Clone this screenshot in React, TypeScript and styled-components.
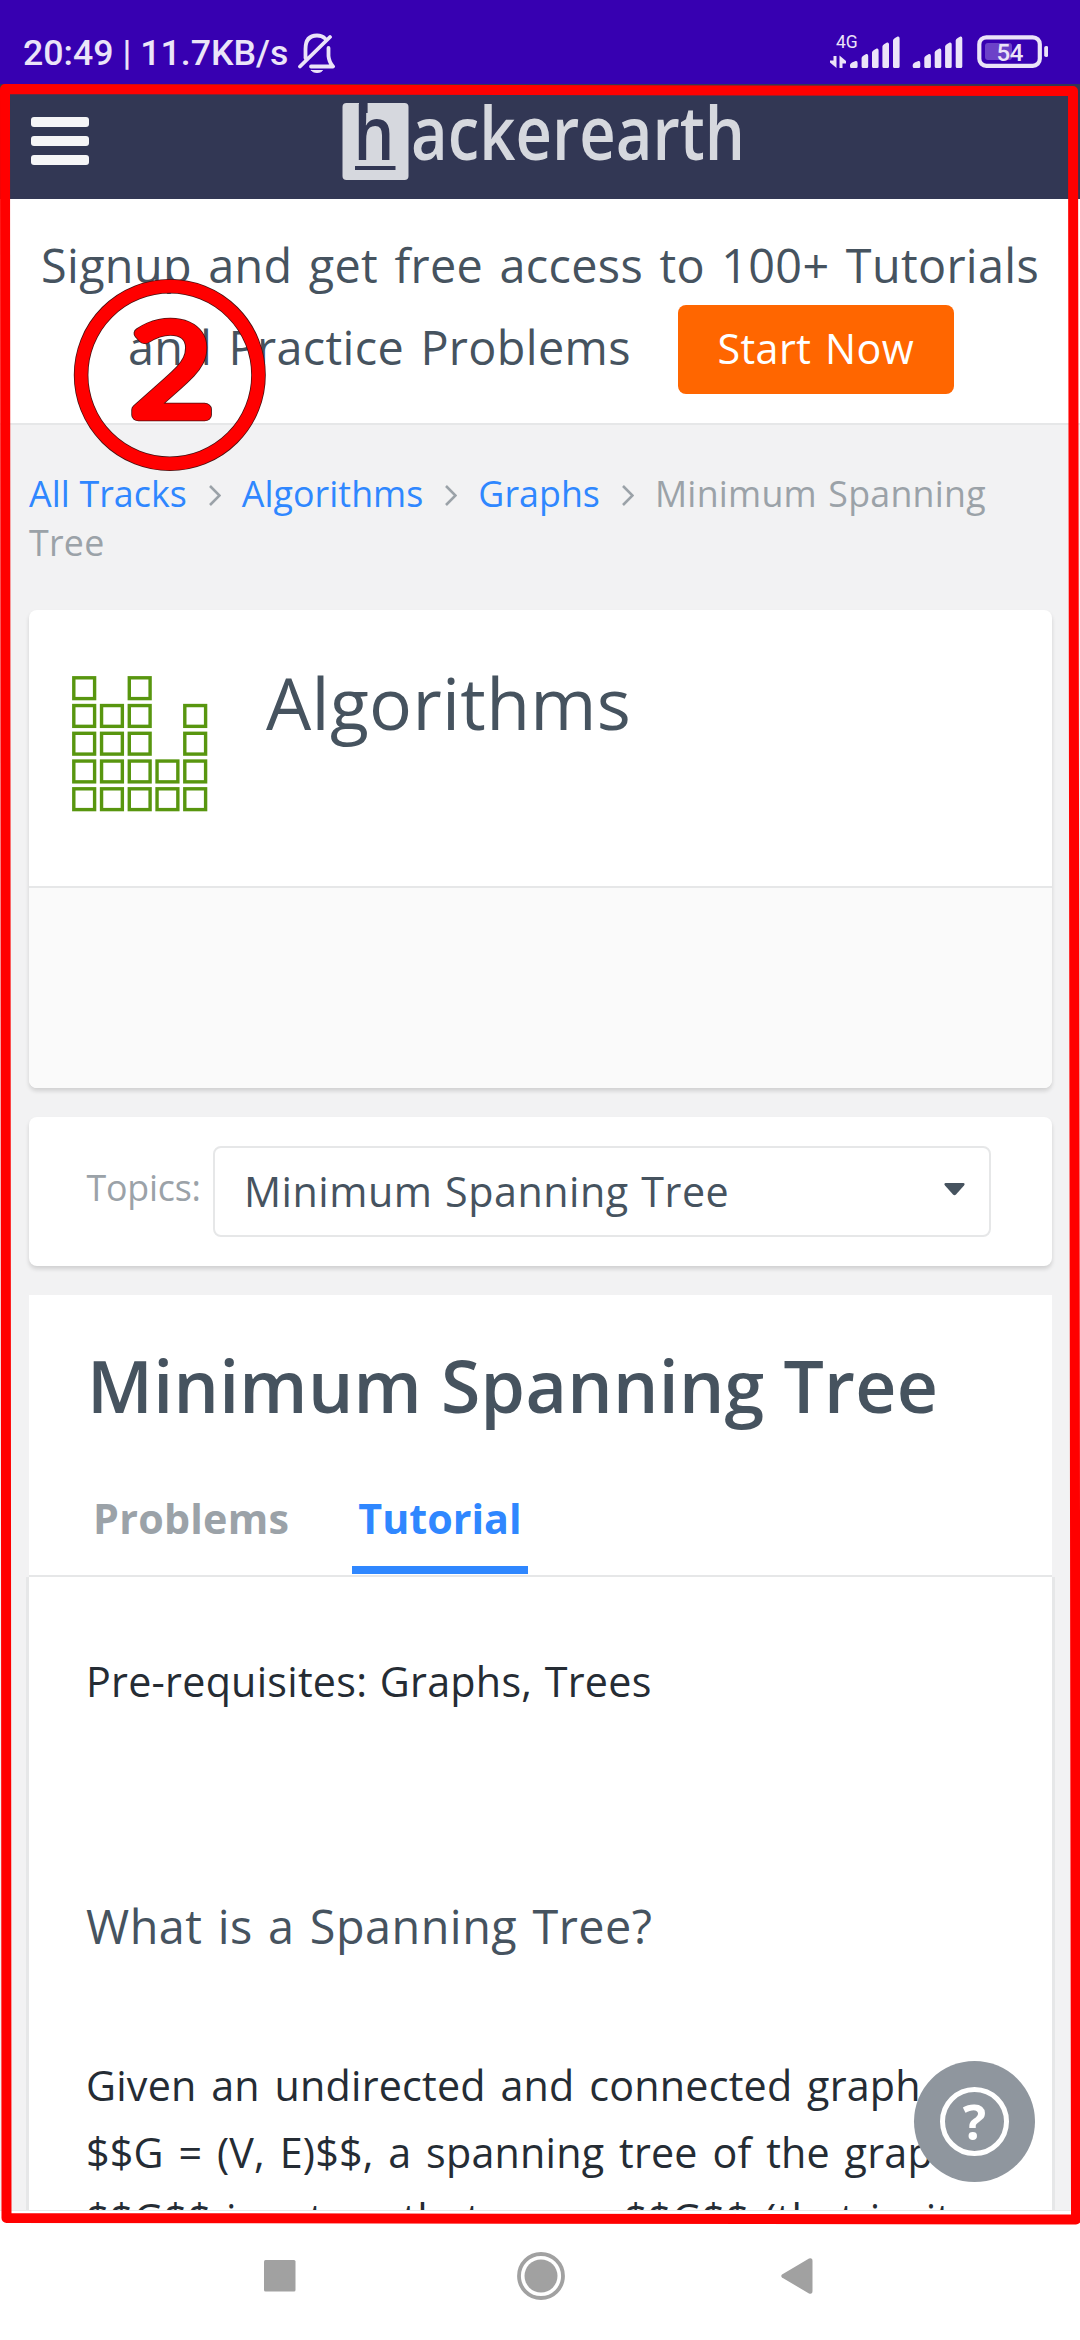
import React from "react";
import styled, { createGlobalStyle } from "styled-components";

const slate = "#46535f";
const ink = "#252c34";
const muted = "#9ba2a8";
const blue = "#2f87ff";
const line = "#e6e7e8";

const GlobalStyle = createGlobalStyle`
  body { margin: 0; background: #fff; }
  * { box-sizing: border-box; }
`;

const Screen = styled.div`
  position: relative;
  display: flex;
  flex-direction: column;
  width: 1080px;
  height: 2340px;
  overflow: hidden;
  background: #fff;
  font-family: "Open Sans", sans-serif;
`;

const StatusBar = styled.div`
  display: flex;
  align-items: flex-start;
  flex: none;
  height: 84px;
  padding: 32px 32px 0 23px;
  background: #3700b1;
  color: #ebe4f8;
  font-family: Roboto, sans-serif;
`;

const StatusText = styled.span`
  font-size: 35.7px;
  font-weight: 500;
  line-height: 42px;
  white-space: nowrap;
`;

const BellIcon = styled.svg`
  margin-left: 9px;
`;

const StatusIcons = styled.svg`
  margin-left: auto;
`;

const TopBar = styled.header`
  display: flex;
  align-items: flex-start;
  flex: none;
  height: 115px;
  padding: 16px 0 0 31px;
  background: #323754;
`;

const MenuButton = styled.div`
  display: flex;
  flex-direction: column;
  gap: 9px;
  width: 58px;
  margin: 17px 253px 0 0;
`;

const MenuBar = styled.span`
  height: 10px;
  border-radius: 3px;
  background: #f5f5f7;
`;

const Logo = styled.svg`
  overflow: visible;
`;

const Banner = styled.section`
  flex: none;
  height: 226px;
  padding: 26px 0 0 41px;
  border-bottom: 2px solid ${line};
  color: ${slate};
  font-size: 46.75px;
  letter-spacing: 0.35px;
  word-spacing: 3.8px;
  white-space: nowrap;
`;

const BannerLine = styled.div`
  line-height: 80px;
`;

const BannerRow = styled.div`
  display: flex;
  height: 89px;
  margin-left: 87px;
  line-height: 85px;
`;

const StartButton = styled.div`
  width: 276px;
  height: 89px;
  margin-left: 47px;
  border-radius: 8px;
  background: #ff6600;
  color: #fff;
  font-size: 41.25px;
  letter-spacing: 0.4px;
  word-spacing: 2.6px;
  line-height: 86px;
  text-align: center;
`;

const Page = styled.main`
  display: flex;
  flex-direction: column;
  flex: none;
  height: 1785px;
  padding: 44px 25px 0 26px;
  overflow: hidden;
  background: #f2f2f3;
`;

const Breadcrumb = styled.nav`
  flex: none;
  height: 141px;
  padding: 0 3px;
  color: ${muted};
  font-size: 35.75px;
  line-height: 49.3px;
  letter-spacing: 0.25px;
  word-spacing: 1.8px;
`;

const Crumb = styled.a`
  color: ${blue};
  letter-spacing: 0.05px;
  word-spacing: 0.3px;
`;

const ChevronIcon = styled.svg`
  margin: 0 21px 0 22px;
  vertical-align: 1px;
`;

const Card = styled.section`
  flex: none;
  margin: 0 3px;
  border-radius: 8px;
  background: #fff;
  box-shadow: 0 3px 4px rgba(0, 0, 0, 0.14);
  overflow: hidden;
`;

const TrackHeader = styled.div`
  display: flex;
  align-items: flex-start;
  height: 278px;
  padding: 48px 0 0 43px;
  border-bottom: 2px solid ${line};
`;

const TrackIcon = styled.svg`
  margin-top: 18px;
`;

const TrackTitle = styled.h1`
  margin: 0 0 0 58px;
  color: ${slate};
  font-size: 71.5px;
  font-weight: 400;
  line-height: 90px;
  letter-spacing: 0.33px;
`;

const TrackFooter = styled.div`
  height: 200px;
  background: #fafafa;
`;

const TopicsCard = styled(Card)`
  display: flex;
  height: 149px;
  margin-top: 29px;
  padding: 29px 61px 0 57.5px;
`;

const TopicsLabel = styled.label`
  width: 126.5px;
  color: ${muted};
  font-size: 35.75px;
  letter-spacing: -0.2px;
  line-height: 82px;
`;

const Select = styled.div`
  display: flex;
  flex: 1;
  justify-content: space-between;
  align-items: flex-start;
  height: 91px;
  padding: 0 24px 0 29px;
  border: 2px solid ${line};
  border-radius: 8px;
  color: ${slate};
  font-size: 41.25px;
  letter-spacing: 0.5px;
  word-spacing: 1.5px;
  line-height: 87px;
`;

const CaretIcon = styled.svg`
  margin-top: 35px;
`;

const TopicHead = styled.section`
  flex: none;
  height: 282px;
  margin: 29px 3px 0;
  padding: 46px 0 0 58px;
  border-bottom: 2px solid ${line};
  background: #fff;
`;

const TopicTitle = styled.h2`
  margin: 0 0 57px;
  color: ${slate};
  font-size: 71.5px;
  font-weight: 600;
  line-height: 90px;
  letter-spacing: 0.3px;
`;

const Tabs = styled.div`
  display: flex;
  gap: 57px;
`;

const Tab = styled.div<{ $active?: boolean }>`
  height: 86px;
  padding: 0 6px;
  border-bottom: 8px solid ${(p) => (p.$active ? blue : "transparent")};
  color: ${(p) => (p.$active ? blue : muted)};
  font-size: 41.25px;
  font-weight: 700;
  letter-spacing: ${(p) => (p.$active ? "0" : "0.25px")};
  line-height: 61px;
`;

const Article = styled.article`
  flex: 1;
  min-height: 0;
  padding: 71px 57px 0;
  border: solid ${line};
  border-width: 0 3px;
  background: #fff;
  color: ${ink};
  font-size: 41.25px;
  line-height: 66.75px;
  white-space: nowrap;
`;

const Prerequisites = styled.p`
  margin: 0;
  letter-spacing: 0.25px;
  word-spacing: 1.6px;
`;

const ArticleHeading = styled.h3`
  margin: 171px 0 86px;
  color: ${slate};
  font-size: 46.75px;
  font-weight: 400;
  line-height: 80px;
  letter-spacing: 0.5px;
  word-spacing: 2.6px;
`;

const Paragraph = styled.p`
  margin: 0;
  letter-spacing: 0.22px;
  word-spacing: 3.7px;
`;

const HelpButton = styled.div`
  position: absolute;
  left: 914px;
  top: 2061px;
  display: flex;
  align-items: center;
  justify-content: center;
  width: 121px;
  height: 121px;
  border-radius: 50%;
  background: #8f969e;
`;

const HelpRing = styled.div`
  width: 69px;
  height: 69px;
  border: 5px solid #fff;
  border-radius: 50%;
  color: #fff;
  font-size: 49px;
  font-weight: 700;
  line-height: 58px;
  text-align: center;
`;

const NavBar = styled.footer`
  display: grid;
  grid-template-columns: 32px 48px 32px;
  align-items: center;
  justify-content: start;
  column-gap: 220.5px;
  flex: 1;
  padding: 0 0 0 264px;
  border-top: 1px solid #e8e8e8;
`;

const BackIcon = styled.svg`
  margin-left: -4px;
`;

const Annotation = styled.svg`
  position: absolute;
  left: 0;
  top: 0;
  pointer-events: none;
`;

const barPath = (x: number, top: number, w = 6.6) =>
  `M${x} ${68 - 1.5}V${top + 4}Q${x} ${top + 2.5} ${x + 2} ${top + 1.5}L${x + w - 2} ${top}Q${x + w} ${top - 0.5} ${x + w} ${top + 2}V66.5Q${x + w} 68 ${x + w - 1.5} 68H${x + 1.5}Q${x} 68 ${x} 66.5Z`;

const signalBars = (x: number) =>
  [barPath(x, 61, 7.6), barPath(x + 11.6, 54), barPath(x + 22, 48.5), barPath(x + 32.4, 42.5), barPath(x + 43, 36.5)].join("");

const Chevron = () => (
  <ChevronIcon width="12" height="21" viewBox="0 0 12 21" fill="none" stroke={muted} strokeWidth="2.6">
    <path d="M1 1l9.5 9.5L1 20" />
  </ChevronIcon>
);

/* Rows filled in each column of the track icon, counted from the top. */
const stacks = [
  [0, 1, 2, 3, 4],
  [1, 2, 3, 4],
  [0, 1, 2, 3, 4],
  [3, 4],
  [1, 2, 3, 4],
];

export default function App() {
  return (
    <Screen>
      <GlobalStyle />
      <StatusBar>
        <StatusText>20:49 | 11.7KB/s</StatusText>
        <BellIcon width="38" height="42" viewBox="296 31 38 42" fill="none" stroke="#ebe4f8" strokeWidth="3.8" strokeLinecap="round" strokeLinejoin="round">
          <path d="M304.500 57V48Q304.500 34.500 316 34.500Q321 34.500 324 37.500M329 36L299 65.500M327.500 47V55Q328 61 332 65.500H310" />
          <path d="M310.500 69.500H321.500Q320 71.500 316 71.500Q312 71.500 310.500 69.500Z" fill="#ebe4f8" strokeWidth="1" />
        </BellIcon>
        <StatusIcons width="220" height="40" viewBox="828 32 220 40" fill="#ebe4f8">
          <text x="836" y="47.500" fontFamily="Roboto, sans-serif" fontSize="17.500">4G</text>
          <path d="M833.500 56H836.500V68L830 62.500V60.500H833.500ZM839.500 68V55.500L846 61V63.500H842.500V68Z" />
          <path d={signalBars(850)} />
          <path d={signalBars(912.7)} />
          <rect x="979.3" y="37.300" width="60.500" height="28.500" rx="7" fill="none" stroke="#ebe4f8" strokeWidth="4.200" />
          <rect x="985" y="43" width="27" height="17" rx="3" fill="#6c42c8" />
          <text x="996.5" y="61" fontFamily="Roboto, sans-serif" fontSize="24" fontWeight="500" textLength="27">54</text>
          <rect x="1044.200" y="46" width="4" height="11" rx="1.800" />
        </StatusIcons>
      </StatusBar>

      <TopBar>
        <MenuButton>
          <MenuBar />
          <MenuBar />
          <MenuBar />
        </MenuButton>
        <Logo width="410" height="82" viewBox="342 100 410 82" fontFamily="Open Sans, sans-serif" fontWeight="600" fontSize="75">
          <defs>
            <clipPath id="badge">
              <rect x="342" y="103" width="67" height="77" />
            </clipPath>
          </defs>
          <rect x="342.500" y="103" width="66" height="77" rx="4" fill="#d6d8de" />
          <g clipPath="url(#badge)" fill="#323754">
            <text transform="translate(353.5 160) scale(0.86 1)">h</text>
            <rect x="359" y="103" width="8.600" height="10" />
            <rect x="355" y="166" width="40.500" height="4" />
          </g>
          <text x="411" y="160" fill="#d6d8de" textLength="334" lengthAdjust="spacingAndGlyphs">ackerearth</text>
        </Logo>
      </TopBar>

      <Banner>
        <BannerLine>Signup and get free access to 100+ Tutorials</BannerLine>
        <BannerRow>
          and Practice Problems
          <StartButton>Start Now</StartButton>
        </BannerRow>
      </Banner>

      <Page>
        <Breadcrumb>
          <Crumb>All Tracks</Crumb>
          <Chevron />
          <Crumb>Algorithms</Crumb>
          <Chevron />
          <Crumb>Graphs</Crumb>
          <Chevron />
          Minimum Spanning Tree
        </Breadcrumb>

        <Card>
          <TrackHeader>
            <TrackIcon width="136" height="136" viewBox="0 0 136 136" fill="none" stroke="#58960f" strokeWidth="3.400">
              {stacks.map((rows, col) =>
                rows.map((row) => (
                  <rect key={`${col}-${row}`} x={1.8 + col * 27.75} y={1.8 + row * 27.75} width="20.800" height="20.800" />
                ))
              )}
            </TrackIcon>
            <TrackTitle>Algorithms</TrackTitle>
          </TrackHeader>
          <TrackFooter />
        </Card>

        <TopicsCard>
          <TopicsLabel>Topics:</TopicsLabel>
          <Select>
            Minimum Spanning Tree
            <CaretIcon width="21" height="13" viewBox="0 0 21 13">
              <path d="M1.500 0H19.500Q21.500 0.500 20 2.500L12 11.500Q10.500 13 9 11.500L1 2.500Q-0.500 0.500 1.500 0Z" fill={slate} />
            </CaretIcon>
          </Select>
        </TopicsCard>

        <TopicHead>
          <TopicTitle>Minimum Spanning Tree</TopicTitle>
          <Tabs>
            <Tab>Problems</Tab>
            <Tab $active>Tutorial</Tab>
          </Tabs>
        </TopicHead>

        <Article>
          <Prerequisites>Pre-requisites: Graphs, Trees</Prerequisites>
          <ArticleHeading>What is a Spanning Tree?</ArticleHeading>
          <Paragraph>
            Given an undirected and connected graph
            <br />
            $$G = (V, E)$$, a spanning tree of the graph
            <br />
            $$G$$ is a tree that spans $$G$$ (that is, it
          </Paragraph>
        </Article>
      </Page>

      <NavBar>
        <svg width="32" height="32" viewBox="0 0 32 32">
          <rect width="31.500" height="31.500" rx="1.500" fill="#a1a1a1" />
        </svg>
        <svg width="48" height="48" viewBox="0 0 48 48">
          <circle cx="24" cy="24" r="22" fill="none" stroke="#a1a1a1" strokeWidth="3.800" />
          <circle cx="24" cy="24" r="16.500" fill="#a1a1a1" />
        </svg>
        <BackIcon width="32" height="36" viewBox="0 0 32 36">
          <path d="M1 16.500Q-0.500 18 1 19.500L28 35.500Q31.500 36.500 31.500 33V3Q31.500-0.500 28 0.500Z" fill="#a1a1a1" />
        </BackIcon>
      </NavBar>

      <HelpButton>
        <HelpRing>?</HelpRing>
      </HelpButton>

      <Annotation width="1080" height="2340" viewBox="0 0 1080 2340" fill="none" strokeLinejoin="round">
        <path d="M5 89L1073 91L1076 2219.500L6.500 2218Z" stroke="#ff0000" strokeWidth="10" />
        <circle cx="169.800" cy="375" r="88.700" stroke="#4a1010" strokeWidth="14.600" />
        <circle cx="169.800" cy="375" r="88.700" stroke="#ff0000" strokeWidth="13" />
        <g transform="translate(130.5 414.500) scale(1.180 1)" fontFamily="Open Sans, sans-serif" fontSize="125" fontWeight="300">
          <text fill="#4a1010" stroke="#4a1010" strokeWidth="12.500">2</text>
          <text fill="#ff0000" stroke="#ff0000" strokeWidth="11">2</text>
        </g>
      </Annotation>
    </Screen>
  );
}
